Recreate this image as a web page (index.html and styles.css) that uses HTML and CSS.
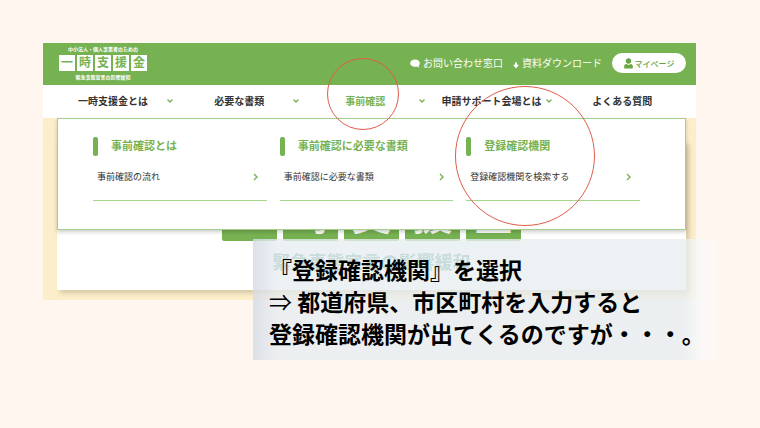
FILE: index.html
```
<!DOCTYPE html>
<html lang="ja">
<head>
<meta charset="utf-8">
<title>一時支援金</title>
<link rel="stylesheet" href="styles.css">
</head>
<body>
<main class="slide">
  <div class="site">
    <header class="header">
      <div class="logo">
        <span class="logo-note">中小法人・個人事業者のための</span>
        <span class="logo-tiles"><b>一</b><b>時</b><b>支</b><b>援</b><b>金</b></span>
        <span class="logo-note">緊急事態宣言の影響緩和</span>
      </div>
      <div class="tools">
        <a class="tool" href="#">
          <svg width="10" height="9" viewBox="0 0 10 9"><path d="M5 .5C2.300.5.2 2.100.2 4.200S2.300 7.800 5 7.800c.6 0 1.200-.1 1.700-.2.8.6 1.700.9 2.700.8-.5-.5-.8-1-.8-1.600.8-.7 1.200-1.600 1.200-2.600C9.800 2.100 7.700.5 5 .5Z"/></svg>
          お問い合わせ窓口
        </a>
        <a class="tool" href="#">
          <svg class="down" width="6" height="7" viewBox="0 0 6 7"><path d="M2 .5h2v2.300h2L3 6.500 0 2.800h2Z"/></svg>
          資料ダウンロード
        </a>
        <button class="mypage" type="button">
          <svg width="9" height="11" viewBox="0 0 9 11"><circle cx="4.500" cy="3" r="2.700"/><path d="M.2 10.500V8.200c0-1.500 1-2.300 2.300-2.300.6.600 1.300.9 2 .9s1.400-.3 2-.9c1.300 0 2.300.8 2.300 2.300v2.300Z"/></svg>
          マイページ
        </button>
      </div>
    </header>

    <nav class="nav">
      <a class="nav-item" href="#"><span>一時支援金とは</span><svg width="6" height="4" viewBox="0 0 6 4"><path d="m.5.5 2.500 2.500L5.500.5"/></svg></a>
      <a class="nav-item" href="#"><span>必要な書類</span><svg width="6" height="4" viewBox="0 0 6 4"><path d="m.5.5 2.500 2.500L5.500.5"/></svg></a>
      <a class="nav-item current" href="#"><span>事前確認</span><svg width="6" height="4" viewBox="0 0 6 4"><path d="m.5.5 2.500 2.500L5.500.5"/></svg></a>
      <a class="nav-item" href="#"><span>申請サポート会場とは</span><svg width="6" height="4" viewBox="0 0 6 4"><path d="m.5.5 2.500 2.500L5.500.5"/></svg></a>
      <a class="nav-item" href="#"><span>よくある質問</span></a>
    </nav>

    <section class="hero">
      <div class="card">
        <div class="hero-tiles"><b>一</b><b>時</b><b>支</b><b>援</b><b>金</b></div>
        <p class="hero-sub">緊急事態宣言の影響緩和</p>
      </div>
      <div class="menu">
        <section class="menu-col">
          <h2>事前確認とは</h2>
          <a href="#">事前確認の流れ<svg width="5" height="8" viewBox="0 0 5 8"><path d="m1 1 3 3-3 3"/></svg></a>
        </section>
        <section class="menu-col">
          <h2>事前確認に必要な書類</h2>
          <a href="#">事前確認に必要な書類<svg width="5" height="8" viewBox="0 0 5 8"><path d="m1 1 3 3-3 3"/></svg></a>
        </section>
        <section class="menu-col">
          <h2>登録確認機関</h2>
          <a href="#">登録確認機関を検索する<svg width="5" height="8" viewBox="0 0 5 8"><path d="m1 1 3 3-3 3"/></svg></a>
        </section>
      </div>
    </section>
  </div>

  <div class="ring ring-small"></div>
  <div class="ring ring-large"></div>
  <p class="caption">『登録確認機関』を選択<br><span class="arrow">⇒</span> 都道府県、市区町村を入力すると<br>登録確認機関が出てくるのですが・・・。</p>
</main>
</body>
</html>
```
FILE: styles.css
```
* { box-sizing: border-box; }

body {
  margin: 0;
  background: #fff6f0;
  color: #333;
  font-family: "Noto Sans CJK JP", sans-serif;
}

a { color: inherit; text-decoration: none; }
h2, p { margin: 0; }
svg { flex: none; }

.slide {
  position: relative;
  min-height: 100vh;
  padding: 43px 64px 43px 43px;
}

/* Header */
.header {
  display: flex;
  justify-content: space-between;
  align-items: center;
  padding: 2px 10px 4px 16px;
  background: #77b252;
  color: #fff;
}

.logo {
  display: flex;
  flex-direction: column;
  align-items: center;
  gap: 2px;
}

.logo-note {
  font-size: 5px;
  font-weight: 700;
  line-height: 8px;
}

.logo-tiles { display: flex; gap: 2px; }

.logo-tiles b {
  width: 16px;
  padding-bottom: 2px;
  background: #fff;
  color: #77b252;
  font-size: 12px;
  font-weight: 700;
  line-height: 14px;
  text-align: center;
}

.tools {
  display: flex;
  align-items: center;
  gap: 10px;
  font-size: 10px;
  line-height: 16px;
}

.tool {
  display: flex;
  align-items: center;
  gap: 3px;
}

.tools svg { fill: currentColor; }
.down { margin-top: 4px; }

.mypage {
  display: flex;
  align-items: center;
  justify-content: center;
  gap: 2px;
  width: 74px;
  height: 20px;
  padding: 0;
  border: 0;
  border-radius: 10px;
  background: #fff;
  color: #68a544;
  font-family: inherit;
  font-size: 8px;
  font-weight: 500;
}

/* Main navigation */
.nav {
  display: grid;
  grid-template-columns: repeat(4, 27fr) 29fr;
  padding: 0 6px 2px 7px;
  background: #fff;
  font-size: 10px;
  font-weight: 700;
  line-height: 31px;
}

.nav-item {
  display: grid;
  grid-template-columns: 6px 1fr 6px;
  align-items: center;
  padding: 0 3px;
  text-align: center;
  white-space: nowrap;
}

.nav-item span { grid-column: 2; }
.current { color: #77b252; }

.nav svg, .menu svg {
  fill: none;
  stroke: #77b252;
  stroke-width: 1.400;
}

/* Hero and open menu */
.hero {
  position: relative;
  padding: 23px 10px 10px 14px;
  background: #fdeecb;
}

.card {
  padding: 45px 0 15px;
  background: #fff;
  box-shadow: 3px 3px 5px #d5c7a4;
}

.hero-tiles {
  display: flex;
  justify-content: center;
  gap: 6px;
}

.hero-tiles b {
  width: 55px;
  border-radius: 2px;
  background: #77b252;
  color: #fff;
  font-size: 40px;
  font-weight: 500;
  line-height: 55px;
  text-align: center;
}

.hero-sub {
  margin-top: 7px;
  padding-bottom: 1px;
  color: #56a08a;
  font-size: 18px;
  font-weight: 700;
  line-height: 26px;
  text-align: center;
}

.menu {
  position: absolute;
  top: 0;
  left: 14px;
  right: 10px;
  display: grid;
  grid-template-columns: repeat(3, 1fr);
  gap: 13px;
  padding: 18px 45px 28px 35px;
  border: 1px solid #a5cf8c;
  background: #fff;
  box-shadow: 0 2px 4px #0003;
}

.menu-col h2 {
  display: flex;
  align-items: flex-start;
  gap: 13px;
  color: #77b252;
  font-size: 11px;
  font-weight: 700;
  line-height: 16px;
}

.menu-col h2::before {
  content: "";
  width: 5px;
  height: 19px;
  border-radius: 2px;
  background: #77b252;
}

.menu-col a {
  display: flex;
  align-items: center;
  justify-content: space-between;
  padding: 11px 9px 13px 4px;
  border-bottom: 1px solid #a5d68a;
  font-size: 9px;
  line-height: 20px;
}

/* Annotations drawn over the page */
.ring {
  position: absolute;
  border: 1px solid #df5b4b;
  border-radius: 50%;
}

.ring-small { left: 327px; top: 58px; width: 72px; height: 72px; }
.ring-large { left: 455px; top: 86px; width: 140px; height: 140px; }

.caption {
  position: absolute;
  left: 253px;
  top: 239px;
  width: 464px;
  padding: 14px 0 11px 16px;
  background: linear-gradient(90deg, #d5dae4d0, #e7edf1c8 24px, #e7edf1c8 430px, #fafafac0 450px, #fafafa90);
  color: #000;
  font-size: 23px;
  font-weight: 700;
  line-height: 32px;
  white-space: nowrap;
}

.arrow { font-weight: 400; }
```
